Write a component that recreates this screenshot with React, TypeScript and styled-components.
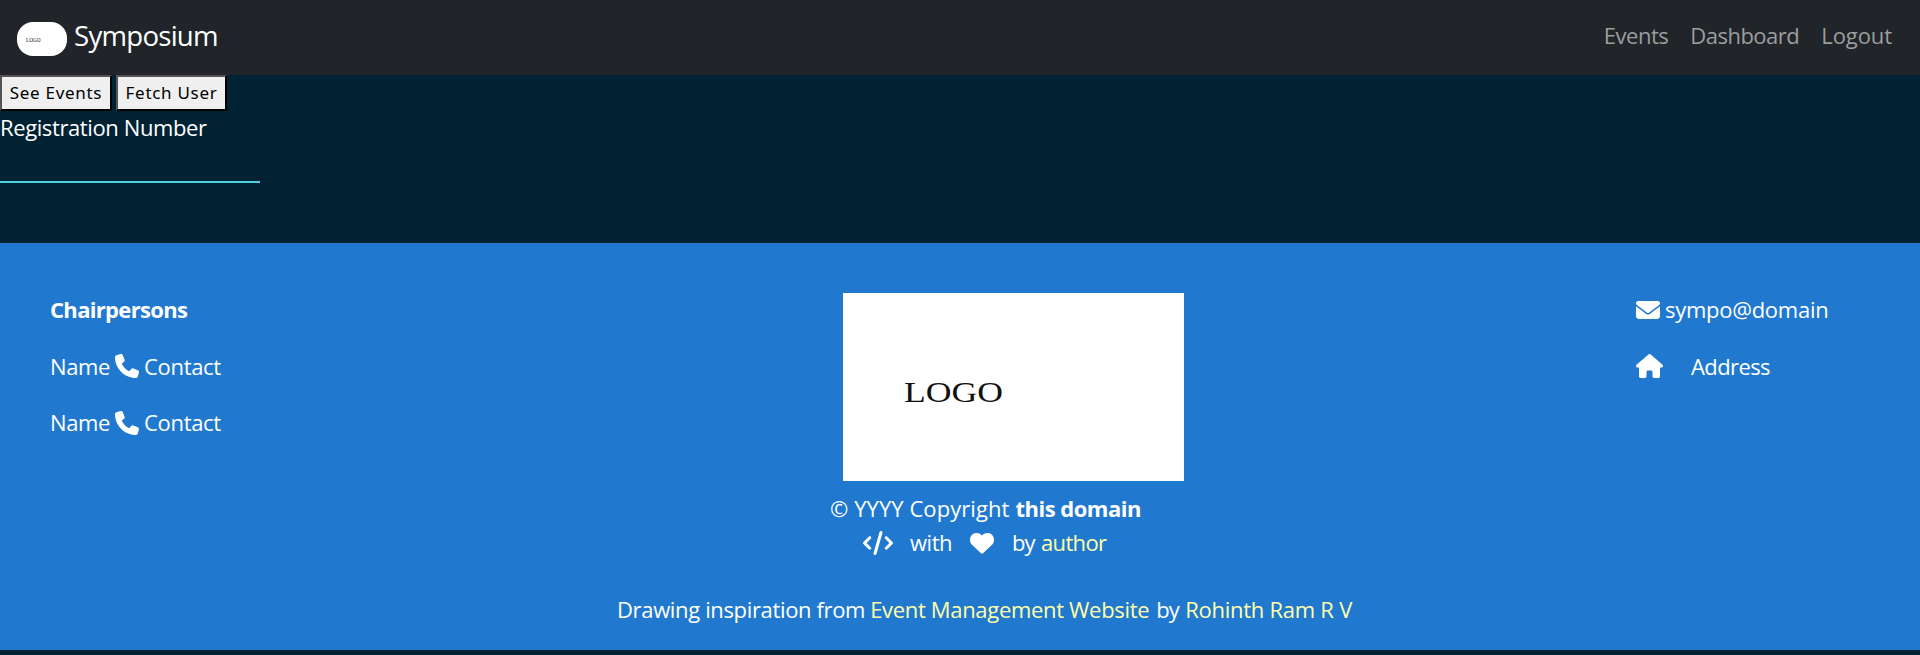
import React from "react";
import styled, { createGlobalStyle, css } from "styled-components";
import { FaCode, FaEnvelope, FaHeart, FaHouse, FaPhone } from "react-icons/fa6";

const GlobalStyle = createGlobalStyle`
  * { box-sizing: border-box; }
  body {
    margin: 0;
    background: #002233;
    color: #fff;
    font: 400 22px/33.75px "Open Sans", "Noto Sans", sans-serif;
  }
`;

const Page = styled.div`
  min-height: 655px;
  display: flex;
  flex-direction: column;
`;

const Navbar = styled.nav`
  height: 75px;
  padding: 0 28px 0 17px;
  display: flex;
  align-items: center;
  justify-content: space-between;
  background: #212529;
`;

const Brand = styled.a`
  display: flex;
  align-items: center;
  gap: 7px;
  color: #fff;
  font-size: 27.6px;
  letter-spacing: -0.75px;
`;

const BrandName = styled.span`
  margin-top: -3px;
`;

const BrandLogo = styled.svg`
  width: 50px;
  height: 34px;
  margin-top: 3px;
  border-radius: 16px;
  background: #fff;
`;

const NavLinks = styled.div`
  display: flex;
  gap: 22px;
  margin-top: -3px;
`;

const NavLink = styled.a<{ $track: number }>`
  color: #9b9d9e;
  letter-spacing: ${(p) => p.$track}px;
`;

const Actions = styled.div`
  display: flex;
  gap: 4px;
`;

const ActionButton = styled.button<{ $width: number }>`
  width: ${(p) => p.$width}px;
  height: 36px;
  padding: 0;
  border: 2px outset #000;
  border-radius: 0;
  background: #efefef;
  color: #000;
  font: 400 17px/30px "Noto Sans", sans-serif;
  letter-spacing: 0.7px;
  white-space: nowrap;
`;

const Field = styled.label`
  display: flex;
  flex-direction: column;
  width: 260px;
  letter-spacing: -0.39px;
`;

const FieldInput = styled.input`
  width: 260px;
  height: 38px;
  padding: 0;
  border: 0;
  border-bottom: 2px solid #4dd0e1;
  background: transparent;
  color: #fff;
  font: inherit;
  outline: none;
`;

const Footer = styled.footer`
  height: 407px;
  margin-top: auto;
  margin-bottom: 5px;
  padding-top: 50px;
  background: #2179cf;
`;

const FooterColumns = styled.div`
  display: grid;
  grid-template-columns: 793px 793px 1fr;
  height: 199px;
  padding-left: 50px;
`;

const Stack = styled.div`
  display: flex;
  flex-direction: column;
  gap: 22.5px;
  padding-top: 0.35px;
`;

const Line = styled.div<{ $indent?: number }>`
  display: flex;
  align-items: center;
  height: 33.75px;
  padding-left: ${(p) => p.$indent ?? 0}px;
  white-space: pre;
`;

const Credit = styled(Line)`
  margin-top: 33.75px;
`;

const textStyle = css<{ $track?: number; $gap?: number }>`
  margin-left: ${(p) => p.$gap ?? 0}px;
  letter-spacing: ${(p) => p.$track ?? -0.3}px;
`;

const Text = styled.span`
  ${textStyle}
`;

const Strong = styled.strong`
  ${textStyle}
`;

const Link = styled.a`
  ${textStyle}
  color: #ffffaa;
`;

const IconSlot = styled.span<{ $gap?: number; $width?: number }>`
  display: flex;
  margin-left: ${(p) => p.$gap ?? 0}px;
  svg {
    width: ${(p) => p.$width ?? 24}px;
    height: 24px;
  }
`;

const FooterLogo = styled.svg`
  width: 341px;
  height: 188px;
  background: #fff;
`;

const LogoText = styled.text`
  font-family: "Liberation Serif", serif;
  letter-spacing: 0;
  fill: #111;
`;

const Chair = () => (
  <Line>
    <Text $track={-0.39}>Name</Text>
    <IconSlot $gap={5}><FaPhone /></IconSlot>
    <Text $gap={5}>Contact</Text>
  </Line>
);

export default function App() {
  return (
    <Page>
      <GlobalStyle />
      <Navbar>
        <Brand>
          <BrandLogo viewBox="0 0 50 34">
            <LogoText x="9" y="20" fontSize="6" textLength="14.5" lengthAdjust="spacingAndGlyphs">LOGO</LogoText>
          </BrandLogo>
          <BrandName>Symposium</BrandName>
        </Brand>
        <NavLinks>
          <NavLink $track={-0.48}>Events</NavLink>
          <NavLink $track={-0.51}>Dashboard</NavLink>
          <NavLink $track={-0.08}>Logout</NavLink>
        </NavLinks>
      </Navbar>
      <Actions>
        <ActionButton $width={112}>See Events</ActionButton>
        <ActionButton $width={111}>Fetch User</ActionButton>
      </Actions>
      <Field>
        Registration Number
        <FieldInput />
      </Field>
      <Footer>
        <FooterColumns>
          <Stack>
            <Line><Strong $track={-0.67}>Chairpersons</Strong></Line>
            <Chair />
            <Chair />
          </Stack>
          <FooterLogo viewBox="0 0 341 188">
            <LogoText x="61" y="109" fontSize="30" textLength="99" lengthAdjust="spacingAndGlyphs">LOGO</LogoText>
          </FooterLogo>
          <Stack>
            <Line>
              <IconSlot><FaEnvelope /></IconSlot>
              <Text $gap={5} $track={-0.27}>sympo@domain</Text>
            </Line>
            <Line>
              <IconSlot $width={27}><FaHouse /></IconSlot>
              <Text $gap={28} $track={-0.61}>Address</Text>
            </Line>
          </Stack>
        </FooterColumns>
        <Line $indent={830}>
          <Text $track={0.07}>© YYYY Copyright</Text>
          <Strong $gap={6} $track={-0.5}>this domain</Strong>
        </Line>
        <Line $indent={863}>
          <IconSlot $width={30}><FaCode /></IconSlot>
          <Text $gap={17} $track={-0.48}>with</Text>
          <IconSlot $gap={18}><FaHeart /></IconSlot>
          <Text $gap={18} $track={-1}>by</Text>
          <Link $gap={6.5} $track={-0.66}>author</Link>
        </Line>
        <Credit $indent={617}>
          <Text $track={-0.35}>Drawing inspiration from</Text>
          <Link $gap={5} $track={-0.32}>Event Management Website</Link>
          <Text $gap={7} $track={-1}>by</Text>
          <Link $gap={6.5} $track={-0.26}>Rohinth Ram R V</Link>
        </Credit>
      </Footer>
    </Page>
  );
}
